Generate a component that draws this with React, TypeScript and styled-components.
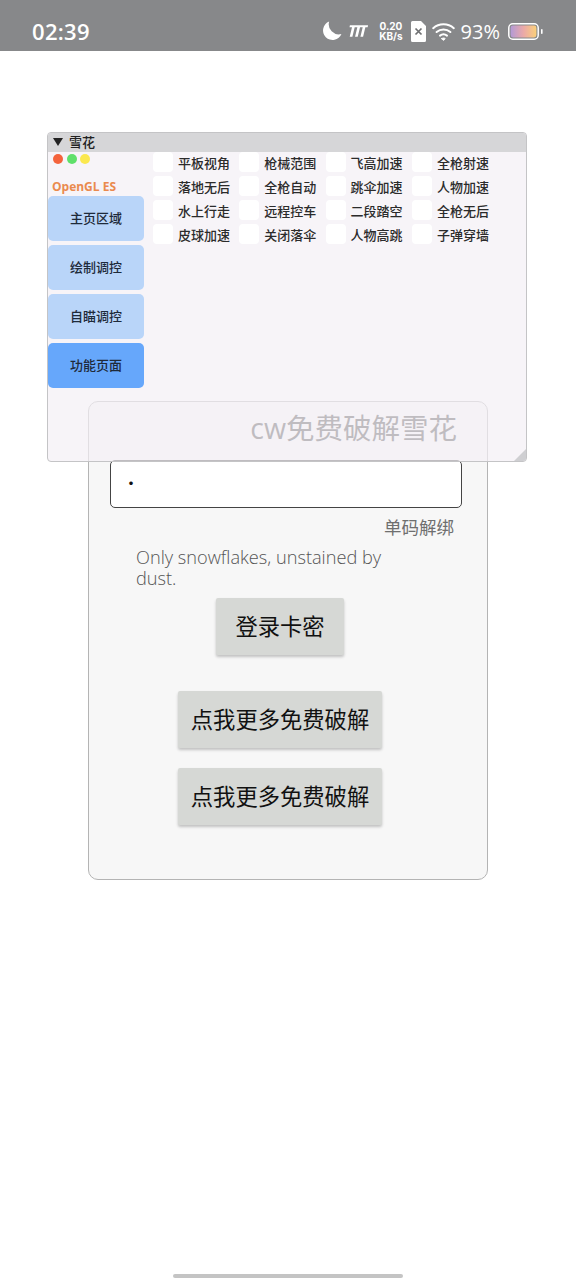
import React from 'react';
import styled, { createGlobalStyle } from 'styled-components';

const cjk = `"Noto Sans CJK SC", "Noto Sans", sans-serif`;

const GlobalStyle = createGlobalStyle`
  html, body {
    margin: 0;
    padding: 0;
    background: #ffffff;
  }
  * {
    box-sizing: border-box;
  }
`;

const Page = styled.div`
  position: relative;
  width: 576px;
  height: 1280px;
  overflow: hidden;
  display: flex;
  flex-direction: column;
  align-items: center;
  background: #ffffff;
  font-family: ${cjk};
`;

// ============== status bar
const StatusBar = styled.div`
  align-self: stretch;
  height: 51px;
  flex: none;
  background: #87888a;
  color: #ffffff;
  display: flex;
  align-items: center;
  padding: 11px 33px 0 32px;
`;

const Clock = styled.div`
  font-family: 'Open Sans', sans-serif;
  font-size: 22px;
  font-weight: 600;
  letter-spacing: 0.3px;
  margin-right: auto;
`;

const StatusIcons = styled.div`
  display: flex;
  align-items: center;
`;

const Speed = styled.div`
  font-family: Inter, sans-serif;
  font-size: 10px;
  line-height: 10.5px;
  font-weight: 700;
  text-align: center;
  margin: 0 8px 0 10px;
`;

const Percent = styled.div`
  font-family: 'Open Sans', sans-serif;
  font-size: 20px;
  font-weight: 500;
  margin: 0 8px 0 6px;
`;

// ============== login card
const Card = styled.div`
  width: 400px;
  height: 479px;
  flex: none;
  margin-top: 350px;
  padding: 14px 25px 0 21px;
  background: #f7f7f7;
  border: 1px solid #b4b4b4;
  border-radius: 10px;
  display: flex;
  flex-direction: column;
`;

const CardTitle = styled.div`
  align-self: flex-end;
  font-size: 28.5px;
  line-height: 28px;
  color: #454545;
  margin: -2px 5px 18px 0;
  font-family: 'Open Sans', ${cjk};
`;

const InputBox = styled.div`
  height: 48px;
  border: 1px solid #444444;
  border-radius: 5px;
  background: #ffffff;
  display: flex;
  align-items: center;
  padding: 0 0 4px 13px;
  color: #111111;
  font-size: 14px;
  font-weight: 700;
`;

const Unbind = styled.div`
  align-self: flex-end;
  font-size: 17.5px;
  line-height: 24px;
  color: #6f6f6f;
  margin: 7px 8px 0 0;
`;

const Slogan = styled.div`
  width: 270px;
  margin: 8px 0 0 26px;
  font-family: 'Open Sans', sans-serif;
  font-size: 18.2px;
  font-weight: 300;
  line-height: 21px;
  color: #555555;
`;

const ActionButton = styled.button<{ $wide?: boolean; $top: number }>`
  align-self: center;
  width: ${(p) => (p.$wide ? 204 : 128)}px;
  height: 57px;
  margin-top: ${(p) => p.$top}px;
  margin-right: 12px;
  border: none;
  border-radius: 2px;
  background: #d6d8d5;
  box-shadow: 0 2px 3px rgba(0, 0, 0, 0.22);
  color: #111111;
  font-family: ${cjk};
  font-size: 22.3px;
  font-weight: 400;
  padding: 0 0 3px;
`;

// ============== floating menu window
const MenuWindow = styled.div`
  position: absolute;
  left: 47px;
  top: 132px;
  width: 480px;
  height: 330px;
  background: rgba(243, 240, 245, 0.7);
  border: 1px solid #c4c4c6;
  border-radius: 4px;
  overflow: hidden;
  display: flex;
  flex-direction: column;
`;

const TitleBar = styled.div`
  height: 19px;
  flex: none;
  background: #d6d6d8;
  display: flex;
  align-items: center;
  gap: 6px;
  padding: 0 0 3px 5px;
  font-size: 13px;
  font-weight: 500;
  color: #222222;
`;

const Triangle = styled.span`
  width: 0;
  height: 0;
  margin-top: 2px;
  border-left: 5px solid transparent;
  border-right: 5px solid transparent;
  border-top: 8px solid #222222;
`;

const MenuBody = styled.div`
  display: flex;
  flex: 1;
`;

const Sidebar = styled.div`
  width: 96px;
  flex: none;
  display: flex;
  flex-direction: column;
`;

const Dots = styled.div`
  display: flex;
  gap: 3.5px;
  padding: 2px 0 0 5px;
  height: 22px;
`;

const Dot = styled.span<{ $color: string }>`
  width: 10px;
  height: 10px;
  border-radius: 50%;
  background: ${(p) => p.$color};
`;

const Brand = styled.div`
  font-family: 'Open Sans', sans-serif;
  font-size: 12px;
  line-height: 16px;
  font-weight: 700;
  color: #ea8a4e;
  padding-left: 4px;
  margin: 5px 0 1px;
`;

const NavList = styled.div`
  display: flex;
  flex-direction: column;
  gap: 4px;
`;

const NavItem = styled.div<{ $active?: boolean }>`
  height: 45px;
  border-radius: 5px;
  background: ${(p) => (p.$active ? '#66a7fb' : '#b9d5f9')};
  color: #1e2a3a;
  font-size: 13px;
  font-weight: 500;
  display: flex;
  align-items: center;
  justify-content: center;
  padding: 0 0 2px 0;
`;

const OptionGrid = styled.div`
  display: grid;
  grid-template-columns: repeat(4, 86.3px);
  grid-auto-rows: 24px;
  margin: -2px 0 0 9px;
  align-content: start;
`;

const Option = styled.div`
  display: flex;
  align-items: center;
  gap: 5px;
  font-size: 13px;
  font-weight: 500;
  color: #2b2b2b;
`;

const CheckBox = styled.span`
  width: 20px;
  height: 20px;
  flex: none;
  border-radius: 4px;
  background: #ffffff;
`;

const Grip = styled.div`
  position: absolute;
  right: 0;
  bottom: 0;
  width: 0;
  height: 0;
  border-left: 12px solid transparent;
  border-bottom: 12px solid #cfcfd2;
`;

const HomeBar = styled.div`
  width: 230px;
  height: 4px;
  flex: none;
  margin-top: auto;
  margin-bottom: 2px;
  border-radius: 2px;
  background: #c4c4c4;
`;

const Spacer = styled.span`
  width: 6px;
`;

const options = [
  '平板视角', '枪械范围', '飞高加速', '全枪射速',
  '落地无后', '全枪自动', '跳伞加速', '人物加速',
  '水上行走', '远程控车', '二段踏空', '全枪无后',
  '皮球加速', '关闭落伞', '人物高跳', '子弹穿墙',
];

const navItems = ['主页区域', '绘制调控', '自瞄调控', '功能页面'];

const MoonIcon = () => (
  <svg width="20" height="20" viewBox="0 0 21 21">
    <path d="M7.5 0.6A10 10 0 1 0 20.4 13.6 A10.5 10.5 0 0 1 7.5 0.6Z" fill="#fff" />
  </svg>
);

const BrandIcon = () => (
  <svg width="21" height="14" viewBox="0 0 22 14" style={{ marginLeft: 6 }}>
    <path
      d="M2 1H21L20.6 3H18.2L15.8 13H13L15.4 3H12.6L10.2 13H7.4L9.8 3H7L4.6 13H1.8L4.2 3H1.6Z"
      fill="#fff"
    />
  </svg>
);

const SimIcon = () => (
  <svg width="15" height="21" viewBox="0 0 15 21">
    <path d="M1.5 0H10L15 5V19.5A1.5 1.5 0 0 1 13.5 21H1.5A1.5 1.5 0 0 1 0 19.5V1.5A1.5 1.5 0 0 1 1.5 0Z" fill="#fff" />
    <path d="M4.5 7.5L10.5 13.5M10.5 7.5L4.5 13.5" stroke="#6e6f71" strokeWidth="1.7" />
  </svg>
);

const WifiIcon = () => (
  <svg width="23" height="19" viewBox="0 0 23 19" fill="none" stroke="#fff" strokeWidth="2" strokeLinecap="round">
    <path d="M1.2 6.2C7 1 16 1 21.8 6.2" />
    <path d="M4.6 10C8.6 6.6 14.4 6.6 18.4 10" />
    <path d="M8 13.6C10 12 13 12 15 13.6" />
    <path d="M9.8 16.6L11.5 18.4L13.2 16.6C12.2 15.8 10.8 15.8 9.8 16.6Z" fill="#fff" strokeWidth="1" />
  </svg>
);

const BatteryIcon = () => (
  <svg width="35" height="17" viewBox="0 0 35 17">
    <defs>
      <linearGradient id="batteryFill" x1="0" x2="1" y1="0" y2="0">
        <stop offset="0" stopColor="#b39ad6" />
        <stop offset="0.5" stopColor="#eba9a8" />
        <stop offset="1" stopColor="#fbd07a" />
      </linearGradient>
    </defs>
    <rect x="0.8" y="0.8" width="29.4" height="15.4" rx="4" fill="none" stroke="#fff" strokeWidth="1.5" />
    <rect x="2.6" y="2.6" width="25.8" height="11.8" rx="2.4" fill="url(#batteryFill)" />
    <rect x="33" y="6" width="1.6" height="5" rx="0.8" fill="#fff" />
  </svg>
);

function App() {
  return (
    <Page>
      <GlobalStyle />
      <StatusBar>
        <Clock>02:39</Clock>
        <StatusIcons>
          <MoonIcon />
          <BrandIcon />
          <Speed>
            0.20
            <br />
            KB/s
          </Speed>
          <SimIcon />
          <Spacer />
          <WifiIcon />
          <Percent>93%</Percent>
          <BatteryIcon />
        </StatusIcons>
      </StatusBar>

      <Card>
        <CardTitle>cw免费破解雪花</CardTitle>
        <InputBox>·</InputBox>
        <Unbind>单码解绑</Unbind>
        <Slogan>Only snowflakes, unstained by dust.</Slogan>
        <ActionButton $top={9}>登录卡密</ActionButton>
        <ActionButton $wide $top={36}>点我更多免费破解</ActionButton>
        <ActionButton $wide $top={20}>点我更多免费破解</ActionButton>
      </Card>

      <MenuWindow>
        <TitleBar>
          <Triangle />
          雪花
        </TitleBar>
        <MenuBody>
          <Sidebar>
            <Dots>
              <Dot $color="#f4633c" />
              <Dot $color="#5fe06a" />
              <Dot $color="#fbe84f" />
            </Dots>
            <Brand>OpenGL ES</Brand>
            <NavList>
              {navItems.map((item, i) => (
                <NavItem key={item} $active={i === 3}>
                  {item}
                </NavItem>
              ))}
            </NavList>
          </Sidebar>
          <OptionGrid>
            {options.map((item) => (
              <Option key={item}>
                <CheckBox />
                {item}
              </Option>
            ))}
          </OptionGrid>
        </MenuBody>
        <Grip />
      </MenuWindow>

      <HomeBar />
    </Page>
  );
}

export default App;
